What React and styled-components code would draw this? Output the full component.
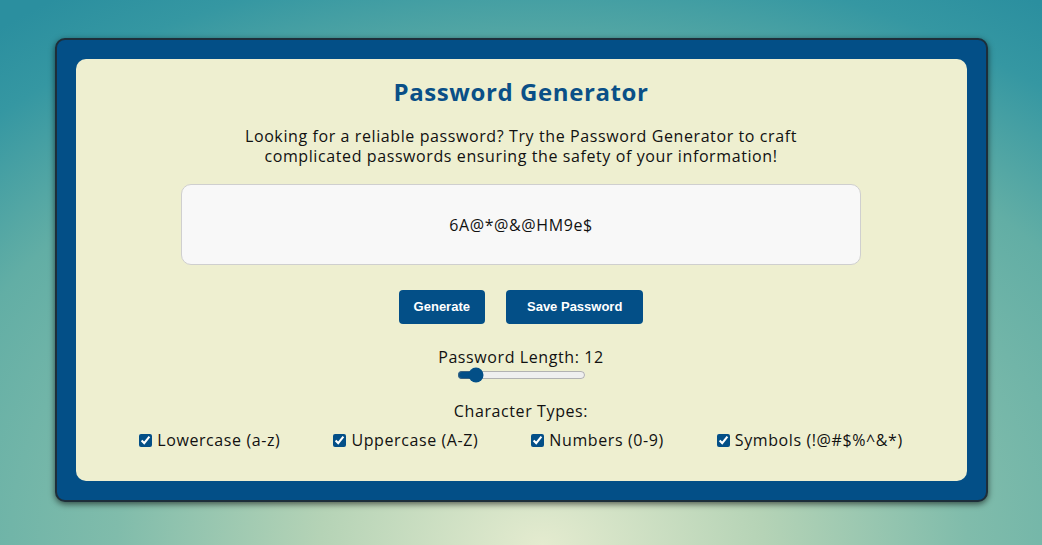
import React, { useState } from "react";
import styled, { createGlobalStyle } from "styled-components";

const Global = createGlobalStyle`
  html, body { margin: 0; padding: 0; }
  body {
    min-height: 545px;
    font-family: "Open Sans", "Noto Sans", sans-serif;
    background: radial-gradient(ellipse 85% 120% at 52% 100%, #e4ebcf 0%, #b5d3b6 25%, #80bcab 48%, #62aea5 72%, #3597a2 90%, #2b8f9f 100%);
    background-color: #4fa2a5;
  }
  #root { min-height: 545px; }
`;

const Page = styled.div`
  display: flex;
  justify-content: center;
  padding-top: 38px;
`;

const Frame = styled.div`
  box-sizing: border-box;
  width: 933px;
  padding: 19px;
  background: #034f87;
  border: 2px solid #1d2e3a;
  border-radius: 10px;
  box-shadow: 0 2px 6px rgba(0, 0, 0, 0.6);
`;

const Panel = styled.div`
  background: #eeefd0;
  border-radius: 10px;
  padding: 18px 20px 31px;
  display: flex;
  flex-direction: column;
  align-items: center;
  color: #111;
  letter-spacing: 0.6px;
`;

const Title = styled.h1`
  margin: 0;
  font-family: "Open Sans", sans-serif;
  font-size: 24px;
  line-height: 30px;
  font-weight: 700;
  color: #0a4f87;
  letter-spacing: 0.6px;
`;

const Intro = styled.p`
  margin: 19px 0 0;
  max-width: 580px;
  text-align: center;
  font-size: 16px;
  line-height: 20px;
`;

const Output = styled.div`
  margin-top: 18px;
  width: 680px;
  height: 81px;
  box-sizing: border-box;
  background: #f8f8f8;
  border: 1px solid #cfcfcf;
  border-radius: 10px;
  display: flex;
  align-items: center;
  justify-content: center;
  font-size: 16px;
`;

const Actions = styled.div`
  margin-top: 25px;
  display: flex;
  gap: 21px;
`;

const Button = styled.button`
  height: 34px;
  padding: 0 ${(p) => p.$pad}px 1px;
  background: #034f87;
  color: #fff;
  border: none;
  border-radius: 4px;
  font-family: "Liberation Sans", Arial, sans-serif;
  font-weight: 700;
  font-size: 13px;
  letter-spacing: 0;
  cursor: pointer;
`;

const Label = styled.div`
  margin-top: ${(p) => p.$top}px;
  font-size: 16px;
  line-height: 20px;
`;

const Range = styled.input`
  margin: 0;
  width: 129px;
  height: 16px;
  accent-color: #034f87;
`;

const Types = styled.div`
  margin-top: 9px;
  display: flex;
  justify-content: center;
  gap: 53px;
`;

const Option = styled.label`
  display: flex;
  align-items: center;
  gap: 5px;
  font-size: 16px;
  line-height: 20px;
`;

const Box = styled.input`
  margin: 0;
  width: 13px;
  height: 13px;
  accent-color: #034f87;
`;

const types = ["Lowercase (a-z)", "Uppercase (A-Z)", "Numbers (0-9)", "Symbols (!@#$%^&*)"];

export default function App() {
  const [len, setLen] = useState(12);
  return (
    <>
      <Global />
      <Page>
        <Frame>
          <Panel>
            <Title>Password Generator</Title>
            <Intro>
              Looking for a reliable password? Try the Password Generator to craft complicated passwords ensuring the safety of your information!
            </Intro>
            <Output>6A@*@&amp;@HM9e$</Output>
            <Actions>
              <Button $pad={15}>Generate</Button>
              <Button $pad={21}>Save Password</Button>
            </Actions>
            <Label $top={23}>Password Length: {len}</Label>
            <Range type="range" min={10} max={30} value={len} onChange={(e) => setLen(+e.target.value)} />
            <Label $top={18}>Character Types:</Label>
            <Types>
              {types.map((t) => (
                <Option key={t}>
                  <Box type="checkbox" defaultChecked />
                  {t}
                </Option>
              ))}
            </Types>
          </Panel>
        </Frame>
      </Page>
    </>
  );
}
